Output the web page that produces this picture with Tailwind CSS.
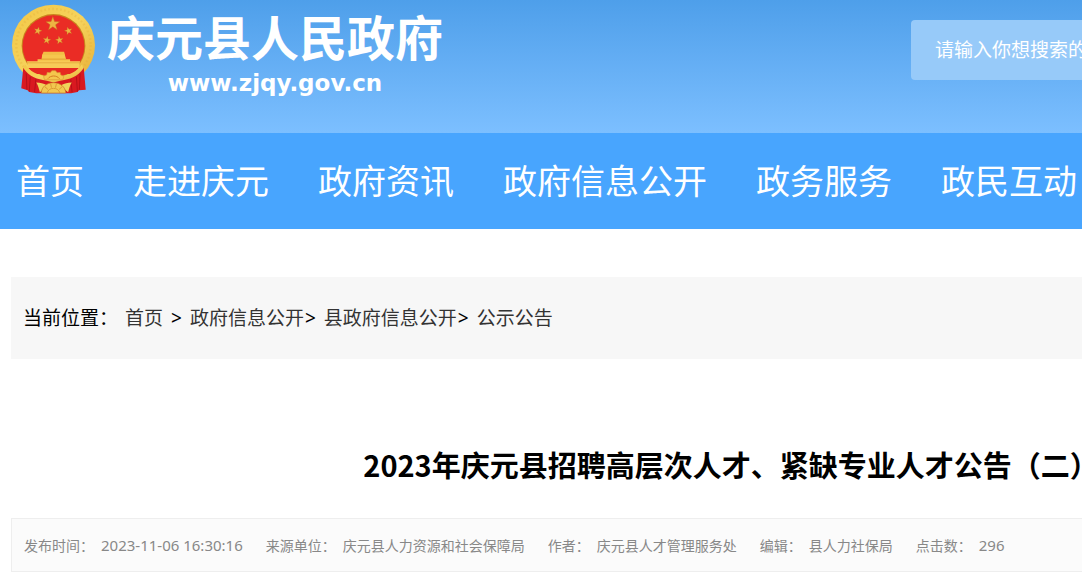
<!DOCTYPE html>
<html lang="zh-CN">
<head>
  <meta charset="UTF-8" />
  <meta name="viewport" content="width=device-width, initial-scale=1.0" />
  <title>2023年庆元县招聘高层次人才、紧缺专业人才公告（二）</title>
  <script src="https://cdn.jsdelivr.net/npm/@tailwindcss/browser@4"></script>
</head>
<body class="bg-white text-black overflow-x-hidden font-['Noto_Sans','Noto_Sans_CJK_SC',sans-serif]">
  <div class="min-w-[1462px]">
    <!-- Header -->
    <header class="flex justify-between items-start h-[133px] bg-linear-to-b from-[#4e9fea] to-[#7cbfff] pl-[10px] pt-[3px]">
      <a href="#" class="flex items-start gap-[10px] text-white">
        <svg class="w-[87px] h-[93px]" viewBox="30 10 260 280" aria-hidden="true">
          <defs>
            <linearGradient id="gold" x1="0" y1="0" x2="1" y2="1">
              <stop offset="0" stop-color="#f3c746" />
              <stop offset="0.5" stop-color="#f6d35c" />
              <stop offset="1" stop-color="#e5ad34" />
            </linearGradient>
            <polygon id="star" points="0,-10 2.4,-3.2 9.5,-3.1 3.8,1.2 5.9,8.1 0,4 -5.9,8.1 -3.8,1.2 -9.5,-3.1 -2.4,-3.2" />
          </defs>
          <!-- wreath -->
          <ellipse cx="160" cy="137" rx="125" ry="122" fill="url(#gold)" />
          <ellipse cx="160" cy="137" rx="112" ry="109" fill="none" stroke="#dfa52f" stroke-width="7" stroke-dasharray="5 7" opacity="0.25" />
          <circle cx="160" cy="139" r="96" fill="#c9831d" />
          <circle cx="160" cy="140" r="93" fill="#ea2c25" />
          <!-- stars -->
          <g fill="#edb443" stroke="#c46a1c" stroke-width="0.6">
            <use href="#star" transform="translate(158 73) scale(2.2)" />
            <use href="#star" transform="translate(113 94) scale(1.25) rotate(15)" />
            <use href="#star" transform="translate(205 94) scale(1.25) rotate(-15)" />
            <use href="#star" transform="translate(140 122) scale(1.25) rotate(10)" />
            <use href="#star" transform="translate(178 122) scale(1.25) rotate(-10)" />
          </g>
          <!-- gate -->
          <path d="M130 157h62l3 11h-70z" fill="#f2bd45" />
          <path d="M126 166h68l4 13h12v12H112v-12h12z" fill="#f5c64e" />
          <path d="M122 179h76" stroke="#d98a26" stroke-width="2" />
          <path d="M80 185h160l-3 21H83z" fill="#f7cc58" />
          <path d="M80 190h160" stroke="#e0a034" stroke-width="2" />
          <path d="M84 206h152l-14 18H98z" fill="#e62921" />
          <!-- drapes -->
          <path d="M69 205c12 14 30 24 49 29l42 10 42-10c19-5 37-15 49-29l6 66-20 2-5 5-19 4H108l-21-4-5-5-19-6z" fill="#d91920" />
          <path d="M78 222l2 49M90 232l-3 45M240 222l-2 49M229 232l3 45M107 240l-4 38M212 240l4 38" stroke="#b51018" stroke-width="3" fill="none" />
          <path d="M70 207c17 25 43 33 67 36l23 6 23-6c24-3 50-11 67-36l-4-12c-16 21-37 31-61 35H135c-24-4-45-14-61-35z" fill="url(#gold)" />
          <path d="M108 249c12 1 23 2 31 8l-9 13-11 9c-3-11-5-21-11-30zM215 249c-12 1-23 2-31 8l9 13 11 9c3-11 5-21 11-30z" fill="#f0d35b" />
          <!-- cogwheel -->
          <path d="M130 231l10-5 1-7 9 1 5-6h11l5 6 9-1 1 7 10 5-3 10H133z" fill="#f4c64d" stroke="#dc9a35" stroke-width="2" />
          <path d="M143 238c8-11 27-11 35 0" fill="none" stroke="#d57c20" stroke-width="3" />
          <path d="M123 281c1-18 16-31 37-31s36 13 37 31z" fill="#f2c850" stroke="#cb7820" stroke-width="2" />
          <path d="M141 281c2-9 9-14 19-14s17 5 19 14M151 252l3 13M169 252l-3 13M134 262l9 8M186 262l-9 8" fill="none" stroke="#dc9b32" stroke-width="3" />
        </svg>
        <div class="flex flex-col items-center pt-[6px] font-bold">
          <span class="text-[48px] leading-[58px]">庆元县人民政府</span>
          <span class="text-[23px] leading-[32px] font-['DejaVu_Sans',sans-serif]">www.zjqy.gov.cn</span>
        </div>
      </a>
      <form class="w-[540px] mr-[11px] mt-[17px]">
        <input type="search" aria-label="搜索" placeholder="请输入你想搜索的内容" class="block w-full h-[60px] rounded px-6 bg-[#97caf9] text-[19px] text-white placeholder:text-white" />
      </form>
    </header>

    <!-- Main menu -->
    <nav class="flex items-center gap-[49px] h-24 px-4 bg-[#48a5fe] text-[34px] text-white whitespace-nowrap">
      <a href="#">首页</a>
      <a href="#">走进庆元</a>
      <a href="#">政府资讯</a>
      <a href="#">政府信息公开</a>
      <a href="#">政务服务</a>
      <a href="#">政民互动</a>
    </nav>

    <main class="mx-[11px] mt-12">
      <!-- Breadcrumb -->
      <div class="flex items-center h-[82px] px-3 bg-[#f7f7f7] text-[19px] text-[#333] whitespace-nowrap">
        <span class="text-black mr-[7px]">当前位置：</span>
        <a href="#">首页</a>
        <span class="text-black mx-2">&gt;</span>
        <a href="#">政府信息公开</a>
        <span class="text-black ml-px mr-2">&gt;</span>
        <a href="#">县政府信息公开</a>
        <span class="text-black ml-px mr-2">&gt;</span>
        <a href="#">公示公告</a>
      </div>

      <!-- Article -->
      <h1 class="mt-[84px] text-center text-[29px] leading-[42px] font-bold font-['Noto_Sans_CJK_SC',sans-serif]">2023年庆元县招聘高层次人才、紧缺专业人才公告（二）</h1>
      <div class="flex items-center gap-[23px] h-[54px] mt-[33px] px-3 bg-[#fbfbfb] border border-[#eee] text-[14px] text-[#888] whitespace-nowrap">
        <p class="flex items-center gap-[7px]"><span>发布时间：</span><time class="text-[15px]">2023-11-06 16:30:16</time></p>
        <p class="flex items-center gap-[7px]"><span>来源单位：</span><span>庆元县人力资源和社会保障局</span></p>
        <p class="flex items-center gap-[7px]"><span>作者：</span><span>庆元县人才管理服务处</span></p>
        <p class="flex items-center gap-[7px]"><span>编辑：</span><span>县人力社保局</span></p>
        <p class="flex items-center gap-[7px]"><span>点击数：</span><span class="text-[15px]">296</span></p>
      </div>
    </main>
  </div>
</body>
</html>
